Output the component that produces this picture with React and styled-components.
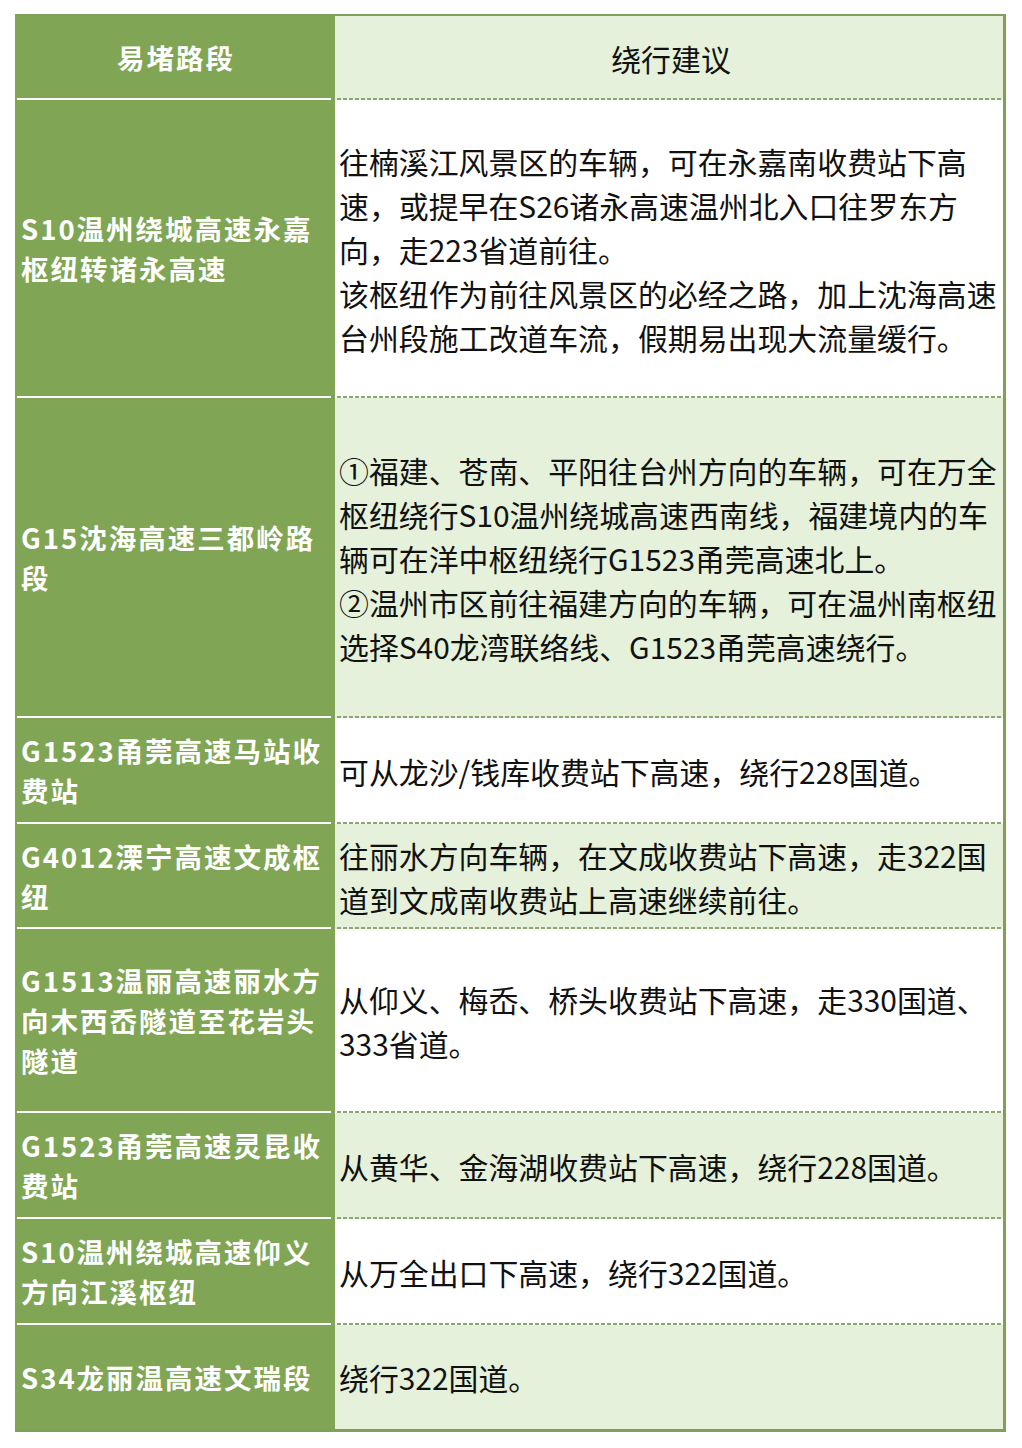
import React from "react";
import styled, { createGlobalStyle } from "styled-components";

const GlobalStyle = createGlobalStyle`
  html, body {
    margin: 0;
    padding: 0;
    background: #ffffff;
  }
  body {
    font-family: "Noto Sans CJK SC", "Noto Sans", sans-serif;
  }
`;

const Table = styled.div`
  width: 988px;
  margin: 14px 0 0 15px;
  background: #80a655;
  border-top: 2px solid #7f9f5a;
  border-right: 3px solid #7f9f5a;
  border-bottom: 3px solid #7f9f5a;
  display: flex;
  flex-direction: column;
`;

const Row = styled.div`
  display: grid;
  grid-template-columns: 320px 668px;
  height: ${(props) => props.h}px;
`;

const Road = styled.div`
  margin: 0 4px 0 2px;
  padding: 0 0 0 4px;
  display: flex;
  flex-direction: column;
  justify-content: center;
  align-items: ${(props) => (props.center ? "center" : "flex-start")};
  color: #ffffff;
  font-weight: 700;
  font-size: 27.5px;
  letter-spacing: 2px;
  line-height: 40px;
  border-bottom: ${(props) => (props.last ? "0" : "2px solid #ffffff")};
  box-sizing: border-box;
`;

const Advice = styled.div`
  padding: 0 0 0 4px;
  display: flex;
  flex-direction: column;
  justify-content: center;
  align-items: ${(props) => (props.center ? "center" : "flex-start")};
  color: #111111;
  font-size: 29.9px;
  line-height: 44px;
  background-color: ${(props) => (props.tint ? "#e5f1da" : "#ffffff")};
  background-image: ${(props) =>
    props.last
      ? "none"
      : "repeating-linear-gradient(to right, #8ca66f 0 4px, transparent 4px 6px)"};
  background-repeat: no-repeat;
  background-position: 2px 100%;
  background-size: calc(100% - 2px) 2px;
  box-sizing: border-box;
`;

const Line = styled.span`
  display: block;
  white-space: nowrap;
`;

const rows = [
  {
    h: 298,
    road: ["S10温州绕城高速永嘉", "枢纽转诸永高速"],
    advice: [
      "往楠溪江风景区的车辆，可在永嘉南收费站下高",
      "速，或提早在S26诸永高速温州北入口往罗东方",
      "向，走223省道前往。",
      "该枢纽作为前往风景区的必经之路，加上沈海高速",
      "台州段施工改道车流，假期易出现大流量缓行。",
    ],
  },
  {
    h: 320,
    road: ["G15沈海高速三都岭路", "段"],
    advice: [
      "①福建、苍南、平阳往台州方向的车辆，可在万全",
      "枢纽绕行S10温州绕城高速西南线，福建境内的车",
      "辆可在洋中枢纽绕行G1523甬莞高速北上。",
      "②温州市区前往福建方向的车辆，可在温州南枢纽",
      "选择S40龙湾联络线、G1523甬莞高速绕行。",
    ],
  },
  {
    h: 106,
    road: ["G1523甬莞高速马站收", "费站"],
    advice: ["可从龙沙/钱库收费站下高速，绕行228国道。"],
  },
  {
    h: 105,
    road: ["G4012溧宁高速文成枢", "纽"],
    advice: ["往丽水方向车辆，在文成收费站下高速，走322国", "道到文成南收费站上高速继续前往。"],
  },
  {
    h: 184,
    road: ["G1513温丽高速丽水方", "向木西岙隧道至花岩头", "隧道"],
    advice: ["从仰义、梅岙、桥头收费站下高速，走330国道、", "333省道。"],
  },
  {
    h: 106,
    road: ["G1523甬莞高速灵昆收", "费站"],
    advice: ["从黄华、金海湖收费站下高速，绕行228国道。"],
  },
  {
    h: 106,
    road: ["S10温州绕城高速仰义", "方向江溪枢纽"],
    advice: ["从万全出口下高速，绕行322国道。"],
  },
  {
    h: 104,
    road: ["S34龙丽温高速文瑞段"],
    advice: ["绕行322国道。"],
  },
];

export default function App() {
  return (
    <>
      <GlobalStyle />
      <Table>
        <Row h={84}>
          <Road center>
            <Line>易堵路段</Line>
          </Road>
          <Advice center tint>
            <Line>绕行建议</Line>
          </Advice>
        </Row>
        {rows.map((row, index) => {
          const last = index === rows.length - 1;
          return (
            <Row h={row.h} key={index}>
              <Road last={last}>
                {row.road.map((line, i) => (
                  <Line key={i}>{line}</Line>
                ))}
              </Road>
              <Advice last={last} tint={index % 2 === 1}>
                {row.advice.map((line, i) => (
                  <Line key={i}>{line}</Line>
                ))}
              </Advice>
            </Row>
          );
        })}
      </Table>
    </>
  );
}
